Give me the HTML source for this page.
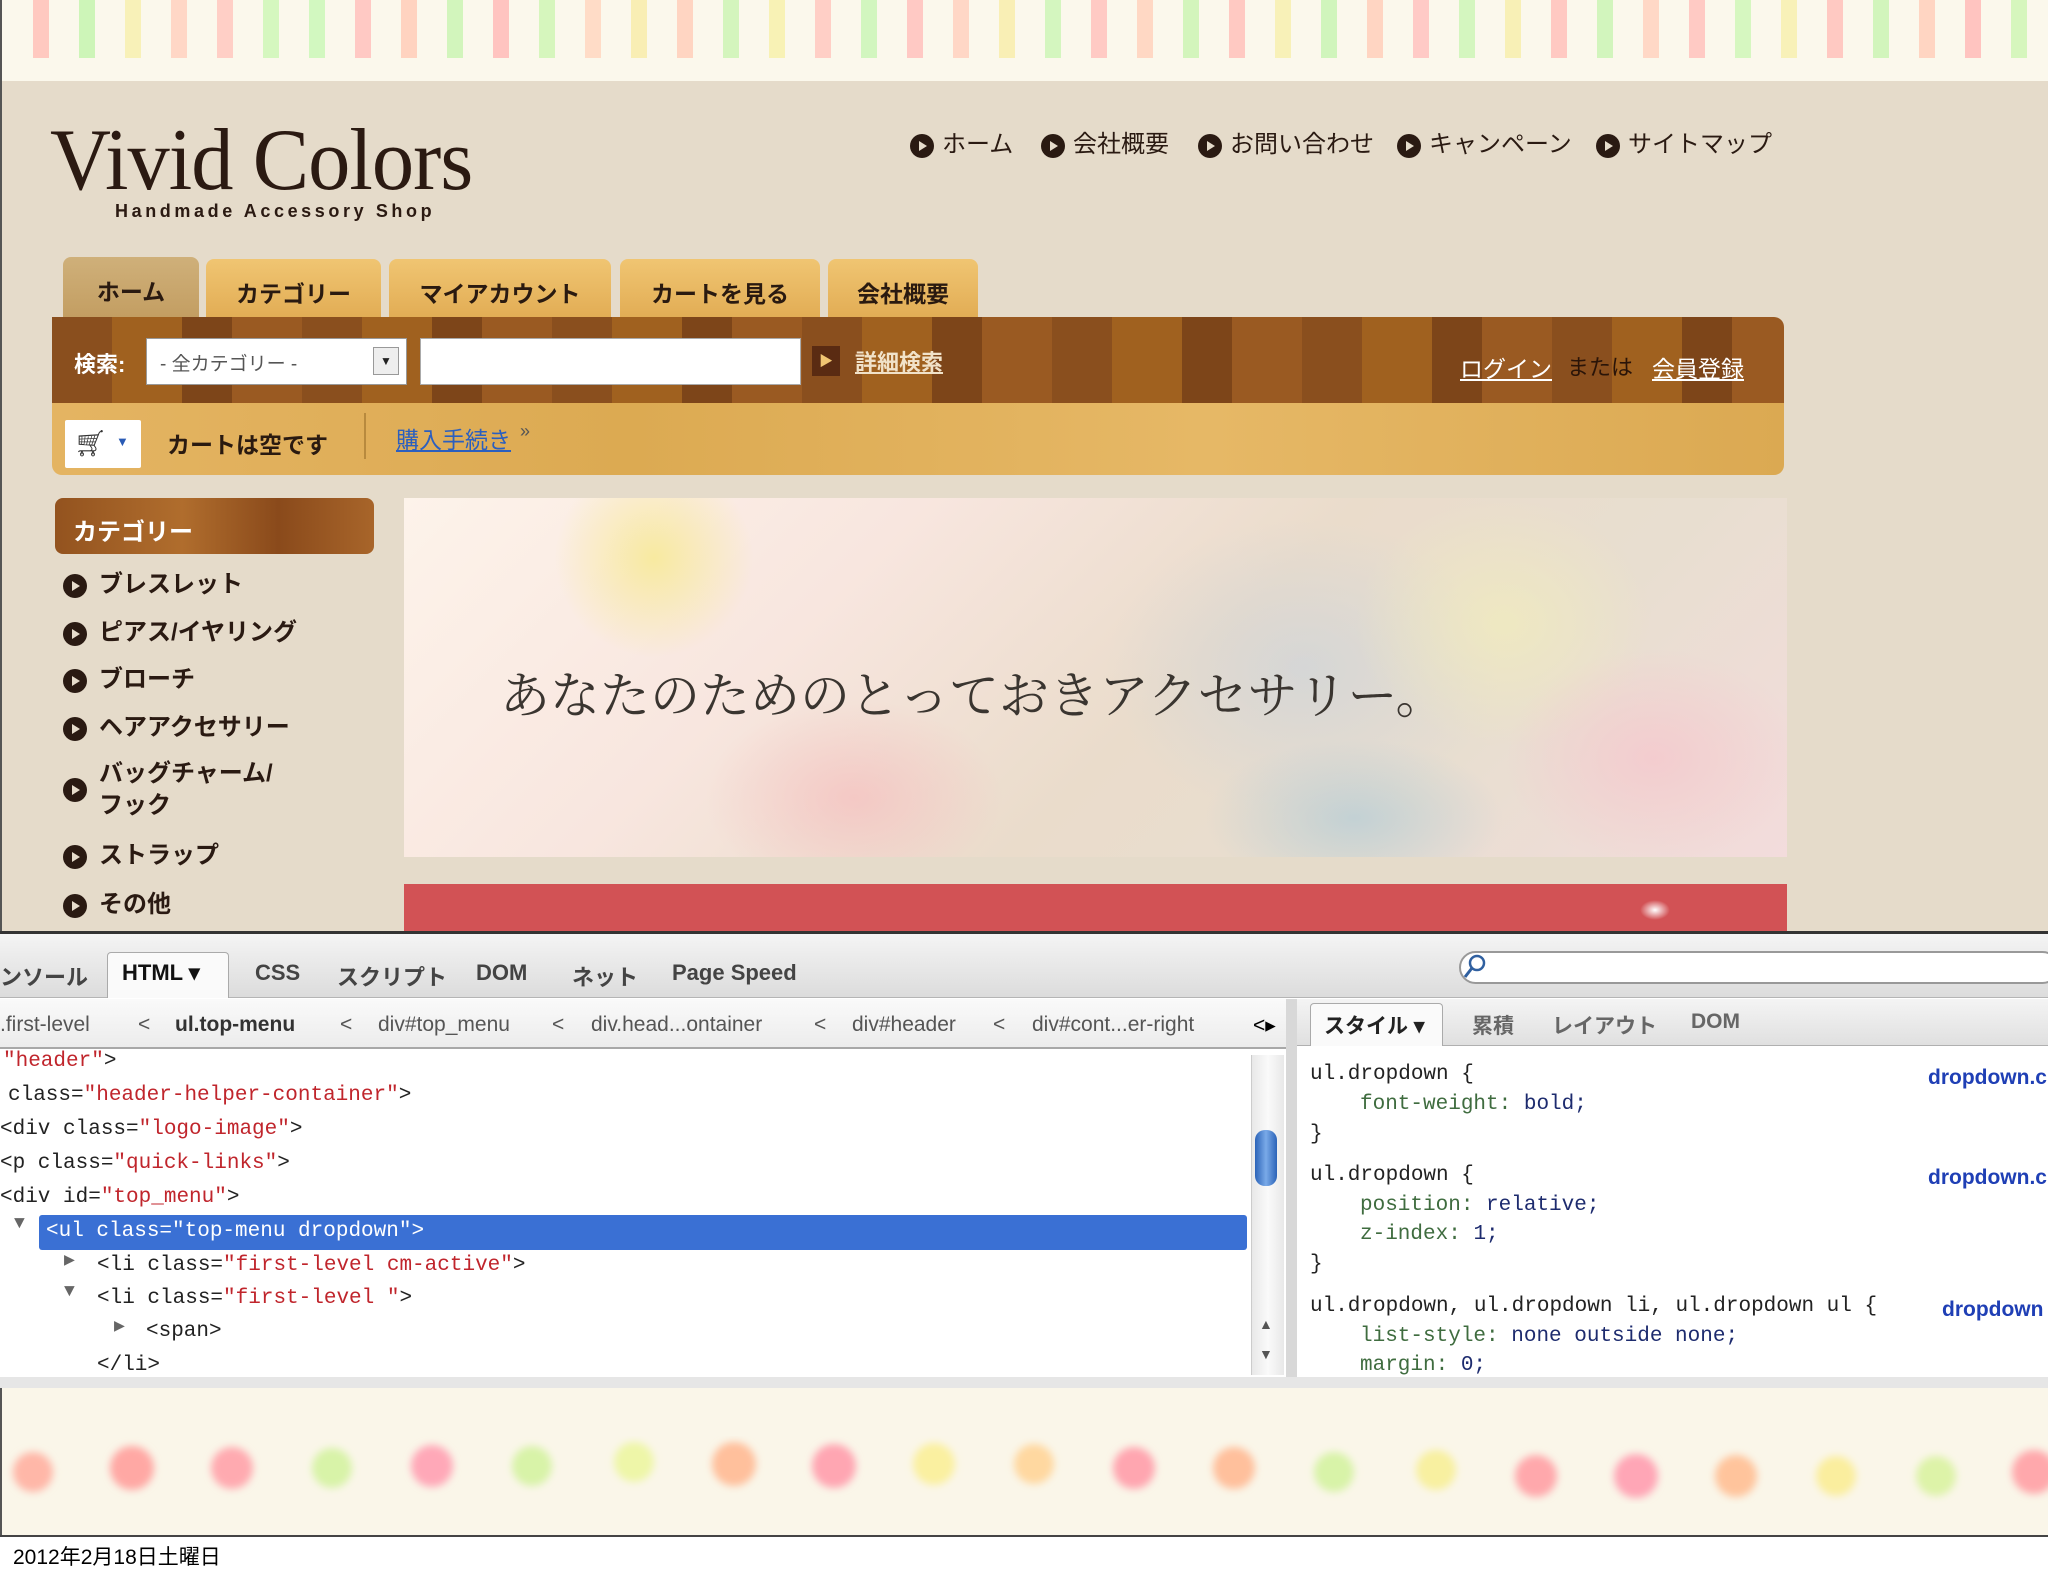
<!DOCTYPE html>
<html><head><meta charset="utf-8">
<style>
*{margin:0;padding:0;box-sizing:border-box}
body{width:2048px;height:1576px;position:relative;overflow:hidden;background:#fff;font-family:"Liberation Sans","Noto Sans CJK JP",sans-serif}
.a{position:absolute;white-space:nowrap}
.mono{font-family:"Liberation Mono","DejaVu Sans Mono","Noto Sans CJK JP",monospace}
.bul{display:inline-block;width:24px;height:24px;border-radius:50%;background:#2a1a12;position:relative;vertical-align:middle}
.bul:after{content:"";position:absolute;left:9px;top:7px;border-left:8px solid #e6dccb;border-top:5px solid transparent;border-bottom:5px solid transparent}
.ql{position:absolute;top:124px;font-size:24px;color:#2a1a12}
.ql .bul{margin-right:8px}
.tab{position:absolute;top:259px;height:58px;border-radius:8px 8px 0 0;background:linear-gradient(#f0c572,#e2ad55);font-weight:bold;font-size:23px;color:#2a1a10;text-align:center;line-height:70px}
.cat{position:absolute;left:63px;font-size:24px;font-weight:bold;color:#2a1a12}
.cat .bul{margin-right:12px}
.code{position:absolute;font-size:21px;color:#222}
.r{color:#c0252c}
.g{color:#3f6c3f}
.n{color:#1d2b6e}
</style></head><body>

<div class="a" style="left:0;top:0;width:2048px;height:81px;background:#fbf8ec;border-left:2px solid #555"></div>
<svg class="a" style="left:0;top:0" width="2048" height="70">
<rect x="33" y="0" width="16" height="58" fill="#ffc9c0"/><rect x="79" y="0" width="16" height="58" fill="#cdf5b8"/><rect x="125" y="0" width="16" height="58" fill="#f8f1b8"/><rect x="171" y="0" width="16" height="58" fill="#ffd7c6"/><rect x="217" y="0" width="16" height="58" fill="#ffcfc6"/><rect x="263" y="0" width="16" height="58" fill="#d5f7bf"/><rect x="309" y="0" width="16" height="58" fill="#d2f8c0"/><rect x="355" y="0" width="16" height="58" fill="#ffc9c4"/><rect x="401" y="0" width="16" height="58" fill="#ffd3c0"/><rect x="447" y="0" width="16" height="58" fill="#d2f5bc"/><rect x="493" y="0" width="16" height="58" fill="#ffc4c0"/><rect x="539" y="0" width="16" height="58" fill="#d6f6bd"/><rect x="585" y="0" width="16" height="58" fill="#ffdcc7"/><rect x="631" y="0" width="16" height="58" fill="#f9eeb4"/><rect x="677" y="0" width="16" height="58" fill="#ffd5c2"/><rect x="723" y="0" width="16" height="58" fill="#d4f5bd"/><rect x="769" y="0" width="16" height="58" fill="#f8f2b5"/><rect x="815" y="0" width="16" height="58" fill="#ffcfc6"/><rect x="861" y="0" width="16" height="58" fill="#d2f6bf"/><rect x="907" y="0" width="16" height="58" fill="#ffc9c4"/><rect x="953" y="0" width="16" height="58" fill="#ffd7c6"/><rect x="999" y="0" width="16" height="58" fill="#f9efb5"/><rect x="1045" y="0" width="16" height="58" fill="#d4f6bf"/><rect x="1091" y="0" width="16" height="58" fill="#ffcac4"/><rect x="1137" y="0" width="16" height="58" fill="#ffd8c4"/><rect x="1183" y="0" width="16" height="58" fill="#d3f5bc"/><rect x="1229" y="0" width="16" height="58" fill="#ffc9c2"/><rect x="1275" y="0" width="16" height="58" fill="#f8f1b8"/><rect x="1321" y="0" width="16" height="58" fill="#d0f5bc"/><rect x="1367" y="0" width="16" height="58" fill="#ffd5c2"/><rect x="1413" y="0" width="16" height="58" fill="#ffcac6"/><rect x="1459" y="0" width="16" height="58" fill="#d4f6bf"/><rect x="1505" y="0" width="16" height="58" fill="#f8f0b6"/><rect x="1551" y="0" width="16" height="58" fill="#ffc9c2"/><rect x="1597" y="0" width="16" height="58" fill="#d2f5bd"/><rect x="1643" y="0" width="16" height="58" fill="#ffd8c6"/><rect x="1689" y="0" width="16" height="58" fill="#ffcac4"/><rect x="1735" y="0" width="16" height="58" fill="#d6f7c0"/><rect x="1781" y="0" width="16" height="58" fill="#f8f1b8"/><rect x="1827" y="0" width="16" height="58" fill="#ffc9c2"/><rect x="1873" y="0" width="16" height="58" fill="#d2f5bc"/><rect x="1919" y="0" width="16" height="58" fill="#ffd5c2"/><rect x="1965" y="0" width="16" height="58" fill="#ffc4c0"/><rect x="2011" y="0" width="16" height="58" fill="#d6f6bd"/>
</svg>

<div class="a" style="left:0;top:81px;width:2048px;height:850px;background:#e5dbca;border-left:2px solid #555"></div>

<div class="a" style="left:50px;top:110px;font-family:'Liberation Serif',serif;font-size:88px;color:#2b1a12;letter-spacing:-1px;transform:scaleX(0.96);transform-origin:left top">Vivid Colors</div>
<div class="a" style="left:115px;top:201px;font-size:18px;font-weight:bold;color:#2b1a12;letter-spacing:3.6px">Handmade Accessory Shop</div>

<div class="ql" style="left:910px"><span class="bul"></span>ホーム</div>
<div class="ql" style="left:1041px"><span class="bul"></span>会社概要</div>
<div class="ql" style="left:1198px"><span class="bul"></span>お問い合わせ</div>
<div class="ql" style="left:1397px"><span class="bul"></span>キャンペーン</div>
<div class="ql" style="left:1596px"><span class="bul"></span>サイトマップ</div>

<div class="tab" style="left:63px;width:136px;background:linear-gradient(#cfb07a,#c39e62);top:257px;height:60px">ホーム</div>
<div class="tab" style="left:206px;width:175px">カテゴリー</div>
<div class="tab" style="left:389px;width:222px">マイアカウント</div>
<div class="tab" style="left:620px;width:200px">カートを見る</div>
<div class="tab" style="left:828px;width:150px">会社概要</div>

<div class="a" style="left:52px;top:317px;width:1732px;height:86px;border-radius:0 10px 0 0;background:repeating-linear-gradient(90deg,#8a4f1e 0 60px,#a0611f 60px 130px,#7d4519 130px 180px,#9a5a22 180px 250px)"></div>
<div class="a" style="left:74px;top:347px;font-size:22px;font-weight:bold;color:#fff">検索:</div>
<div class="a" style="left:146px;top:338px;width:261px;height:47px;background:#fff;border:1px solid #999"></div>
<div class="a" style="left:160px;top:349px;font-size:19px;color:#555">- 全カテゴリー -</div>
<div class="a" style="left:373px;top:347px;width:26px;height:28px;background:#eee;border:1px solid #999;font-size:12px;text-align:center;line-height:26px;color:#222">▼</div>
<div class="a" style="left:420px;top:338px;width:381px;height:47px;background:#fff;border:1px solid #aaa"></div>
<div class="a" style="left:812px;top:346px;width:28px;height:30px;background:#5a2b12;color:#f0c572;font-size:14px;text-align:center;line-height:30px">▶</div>
<div class="a" style="left:855px;top:345px;font-size:22px;font-weight:bold;color:#f1e2c9;text-decoration:underline">詳細検索</div>
<div class="a" style="left:1460px;top:350px;font-size:23px;color:#fff;text-decoration:underline">ログイン</div>
<div class="a" style="left:1567px;top:350px;font-size:22px;color:#2a1408">または</div>
<div class="a" style="left:1652px;top:350px;font-size:23px;color:#fff;text-decoration:underline">会員登録</div>

<div class="a" style="left:52px;top:403px;width:1732px;height:72px;border-radius:0 0 10px 10px;background:linear-gradient(90deg,#e4b462,#dcaa52,#e6b866,#dba952)"></div>
<div class="a" style="left:65px;top:420px;width:76px;height:48px;background:#fff;border-radius:2px"></div>
<div class="a" style="left:74px;top:428px;font-size:26px;color:#333">🛒︎</div>
<div class="a" style="left:116px;top:434px;font-size:13px;color:#2a5bb5">▼</div>
<div class="a" style="left:167px;top:426px;font-size:23px;font-weight:bold;color:#2a1a10">カートは空です</div>
<div class="a" style="left:364px;top:413px;width:2px;height:46px;background:#b88a3e"></div>
<div class="a" style="left:396px;top:421px;font-size:23px;color:#2b5fbf;text-decoration:underline">購入手続き</div>
<div class="a" style="left:520px;top:421px;font-size:18px;color:#555">»</div>

<div class="a" style="left:55px;top:498px;width:319px;height:56px;border-radius:8px;background:linear-gradient(90deg,#93531f,#b06d2d 40%,#8a4a1b 70%,#a8652a)"></div>
<div class="a" style="left:73px;top:512px;font-size:24px;font-weight:bold;color:#fff">カテゴリー</div>
<div class="cat" style="top:564px"><span class="bul"></span>ブレスレット</div>
<div class="cat" style="top:612px"><span class="bul"></span>ピアス/イヤリング</div>
<div class="cat" style="top:659px"><span class="bul"></span>ブローチ</div>
<div class="cat" style="top:707px"><span class="bul"></span>ヘアアクセサリー</div>
<div class="a" style="left:63px;top:778px"><span class="bul"></span></div>
<div class="cat" style="left:99px;top:758px;line-height:32px">バッグチャーム/<br>フック</div>
<div class="cat" style="top:835px"><span class="bul"></span>ストラップ</div>
<div class="cat" style="top:884px"><span class="bul"></span>その他</div>

<div class="a" style="left:404px;top:498px;width:1383px;height:359px;overflow:hidden;background:linear-gradient(135deg,#fdf3ea 0%,#f8e6df 30%,#eadccb 55%,#e8ded0 75%,#f3dcdc 100%)">
<div class="a" style="left:150px;top:-40px;width:200px;height:200px;border-radius:50%;background:radial-gradient(#f8eaa0,rgba(248,234,160,0) 70%)"></div>
<div class="a" style="left:700px;top:20px;width:400px;height:300px;border-radius:50%;background:radial-gradient(rgba(200,210,220,.6),rgba(200,210,220,0) 70%)"></div>
<div class="a" style="left:950px;top:0;width:300px;height:250px;border-radius:50%;background:radial-gradient(rgba(240,235,190,.8),rgba(240,235,190,0) 70%)"></div>
<div class="a" style="left:1100px;top:150px;width:300px;height:220px;border-radius:50%;background:radial-gradient(rgba(245,200,205,.8),rgba(245,200,205,0) 70%)"></div>
<div class="a" style="left:300px;top:200px;width:300px;height:200px;border-radius:50%;background:radial-gradient(rgba(245,190,190,.7),rgba(245,190,190,0) 70%)"></div>
<div class="a" style="left:800px;top:240px;width:300px;height:160px;border-radius:50%;background:radial-gradient(rgba(170,200,215,.6),rgba(170,200,215,0) 70%)"></div>
</div>
<div class="a" style="left:500px;top:656px;font-family:'Noto Serif CJK SC','Noto Sans CJK JP',serif;font-size:50px;color:#3a3530">あなたのためのとっておきアクセサリー。</div>

<div class="a" style="left:404px;top:884px;width:1383px;height:47px;background:#d25255"></div>
<div class="a" style="left:1640px;top:900px;width:30px;height:20px;background:radial-gradient(#fff,rgba(255,255,255,0) 70%)"></div>

<div class="a" style="left:0;top:931px;width:2048px;height:3px;background:#333"></div>
<div class="a" style="left:0;top:934px;width:2048px;height:64px;background:linear-gradient(#f4f4f4,#dcdcdc);border-bottom:1px solid #b5b5b5"></div>
<div class="a" style="left:107px;top:952px;width:122px;height:46px;background:#fafafa;border:1px solid #aaa;border-bottom:none;border-radius:4px 4px 0 0"></div>
<div class="a" style="left:0;top:960px;font-size:22px;color:#444;font-weight:bold">
<span>ンソール</span><span style="position:absolute;left:122px;color:#111">HTML ▾</span><span style="position:absolute;left:255px">CSS</span><span style="position:absolute;left:337px">スクリプト</span><span style="position:absolute;left:476px">DOM</span><span style="position:absolute;left:572px">ネット</span><span style="position:absolute;left:672px">Page Speed</span></div>
<div class="a" style="left:1459px;top:951px;width:600px;height:33px;background:#fff;border:2px solid #999;border-radius:17px"></div>
<svg class="a" style="left:1460px;top:952px" width="30" height="30"><circle cx="17" cy="11" r="7" fill="none" stroke="#3060a0" stroke-width="2.5"/><line x1="12" y1="16" x2="5" y2="25" stroke="#3060a0" stroke-width="3"/></svg>

<div class="a" style="left:0;top:999px;width:1286px;height:50px;background:linear-gradient(#fafafa,#ececec);border-bottom:2px solid #a8a8a8"></div>
<div class="a" style="left:0;top:1013px;font-size:21px;color:#555">
<span>.first-level</span><span style="position:absolute;left:138px">&lt;</span><span style="position:absolute;left:175px;color:#333;font-weight:bold">ul.top-menu</span><span style="position:absolute;left:340px">&lt;</span><span style="position:absolute;left:378px">div#top_menu</span><span style="position:absolute;left:552px">&lt;</span><span style="position:absolute;left:591px">div.head...ontainer</span><span style="position:absolute;left:814px">&lt;</span><span style="position:absolute;left:852px">div#header</span><span style="position:absolute;left:993px">&lt;</span><span style="position:absolute;left:1032px">div#cont...er-right</span><span style="position:absolute;left:1253px;color:#000">&lt;▸</span></div>

<div class="a" style="left:0;top:1051px;width:1286px;height:327px;background:#fff"></div>
<div class="a" style="left:39px;top:1215px;width:1208px;height:35px;background:#3a70d4;border-radius:3px"></div>
<div class="code mono" style="left:3px;top:1050px"><span class="r">"header"</span>&gt;</div>
<div class="code mono" style="left:8px;top:1084px">class=<span class="r">"header-helper-container"</span>&gt;</div>
<div class="code mono" style="left:0;top:1118px">&lt;div class=<span class="r">"logo-image"</span>&gt;</div>
<div class="code mono" style="left:0;top:1152px">&lt;p class=<span class="r">"quick-links"</span>&gt;</div>
<div class="code mono" style="left:0;top:1186px">&lt;div id=<span class="r">"top_menu"</span>&gt;</div>
<div class="code mono" style="left:14px;top:1214px;color:#666;font-size:18px">▼</div>
<div class="code mono" style="left:46px;top:1220px;color:#fff">&lt;ul class="top-menu dropdown"&gt;</div>
<div class="code mono" style="left:64px;top:1249px;color:#666;font-size:18px">▶</div>
<div class="code mono" style="left:97px;top:1254px">&lt;li class=<span class="r">"first-level cm-active"</span>&gt;</div>
<div class="code mono" style="left:64px;top:1282px;color:#666;font-size:18px">▼</div>
<div class="code mono" style="left:97px;top:1287px">&lt;li class=<span class="r">"first-level "</span>&gt;</div>
<div class="code mono" style="left:114px;top:1315px;color:#666;font-size:18px">▶</div>
<div class="code mono" style="left:146px;top:1320px">&lt;span&gt;</div>
<div class="code mono" style="left:97px;top:1354px">&lt;/li&gt;</div>
<div class="a" style="left:1251px;top:1055px;width:33px;height:320px;background:linear-gradient(90deg,#e8e8e8,#fafafa,#e8e8e8);border-left:1px solid #ccc"></div>
<div class="a" style="left:1255px;top:1130px;width:22px;height:56px;background:linear-gradient(90deg,#2b63b8,#7aaae8,#2b63b8);border-radius:10px"></div>
<div class="a" style="left:1259px;top:1316px;font-size:14px;color:#555">▲</div>
<div class="a" style="left:1259px;top:1346px;font-size:14px;color:#555">▼</div>
<div class="a" style="left:1286px;top:999px;width:11px;height:380px;background:#d8d8d8"></div>

<div class="a" style="left:1297px;top:999px;width:751px;height:47px;background:linear-gradient(#f4f4f4,#e0e0e0);border-bottom:1px solid #b0b0b0"></div>
<div class="a" style="left:1310px;top:1003px;width:133px;height:43px;background:#fafafa;border:1px solid #aaa;border-bottom:none;border-radius:4px 4px 0 0"></div>
<div class="a" style="left:1324px;top:1010px;font-size:21px;font-weight:bold;color:#222">スタイル ▾</div>
<div class="a" style="left:1472px;top:1010px;font-size:21px;font-weight:bold;color:#666">累積</div>
<div class="a" style="left:1552px;top:1010px;font-size:21px;font-weight:bold;color:#666">レイアウト</div>
<div class="a" style="left:1691px;top:1010px;font-size:21px;font-weight:bold;color:#666">DOM</div>
<div class="a" style="left:1297px;top:1047px;width:751px;height:331px;background:#fff"></div>
<div class="code mono" style="left:1310px;top:1063px">ul.dropdown {</div>
<div class="code mono" style="left:1360px;top:1093px"><span class="g">font-weight:</span> <span class="n">bold;</span></div>
<div class="code mono" style="left:1310px;top:1123px">}</div>
<div class="code mono" style="left:1310px;top:1164px">ul.dropdown {</div>
<div class="code mono" style="left:1360px;top:1194px"><span class="g">position:</span> <span class="n">relative;</span></div>
<div class="code mono" style="left:1360px;top:1223px"><span class="g">z-index:</span> <span class="n">1;</span></div>
<div class="code mono" style="left:1310px;top:1253px">}</div>
<div class="code mono" style="left:1310px;top:1295px">ul.dropdown, ul.dropdown li, ul.dropdown ul {</div>
<div class="code mono" style="left:1360px;top:1325px"><span class="g">list-style:</span> <span class="n">none outside none;</span></div>
<div class="code mono" style="left:1360px;top:1354px"><span class="g">margin:</span> <span class="n">0;</span></div>
<div class="code" style="left:1928px;top:1066px;color:#1f3fb5;font-weight:bold">dropdown.c</div>
<div class="code" style="left:1928px;top:1166px;color:#1f3fb5;font-weight:bold">dropdown.c</div>
<div class="code" style="left:1942px;top:1298px;color:#1f3fb5;font-weight:bold">dropdown</div>

<div class="a" style="left:0;top:1377px;width:2048px;height:11px;background:#e6e6e6"></div>

<div class="a" style="left:0;top:1388px;width:2048px;height:147px;background:#faf6e9;border-left:2px solid #555"></div>
<svg class="a" style="left:0;top:1388px" width="2048" height="147">
<defs><filter id="b"><feGaussianBlur stdDeviation="4"/></filter></defs>
<g filter="url(#b)">
<circle cx="33" cy="84" r="20" fill="#ffb7a8"/><circle cx="132" cy="80" r="22" fill="#ffa8a4"/><circle cx="232" cy="80" r="21" fill="#ffaab0"/><circle cx="332" cy="80" r="20" fill="#d8f3a8"/><circle cx="432" cy="78" r="21" fill="#ffa8b8"/><circle cx="532" cy="78" r="20" fill="#d8f3a8"/><circle cx="634" cy="74" r="20" fill="#eef6a8"/><circle cx="734" cy="76" r="22" fill="#ffc09c"/><circle cx="834" cy="78" r="22" fill="#ffa6b2"/><circle cx="934" cy="76" r="21" fill="#faf0a0"/><circle cx="1034" cy="76" r="20" fill="#ffd8a0"/><circle cx="1134" cy="80" r="21" fill="#ffa6b0"/><circle cx="1234" cy="80" r="21" fill="#ffc09c"/><circle cx="1334" cy="84" r="20" fill="#d8f3a8"/><circle cx="1436" cy="82" r="20" fill="#f8f0a0"/><circle cx="1536" cy="88" r="21" fill="#ffa8ac"/><circle cx="1636" cy="88" r="22" fill="#ffa6b6"/><circle cx="1736" cy="88" r="21" fill="#ffc49c"/><circle cx="1836" cy="88" r="20" fill="#faee9e"/><circle cx="1936" cy="88" r="20" fill="#ddf3a8"/><circle cx="2034" cy="84" r="22" fill="#ffa8ac"/>
</g></svg>

<div class="a" style="left:0;top:1535px;width:2048px;height:2px;background:#444"></div>
<div class="a" style="left:13px;top:1541px;font-size:21px;color:#000">2012年2月18日土曜日</div>
</body></html>
